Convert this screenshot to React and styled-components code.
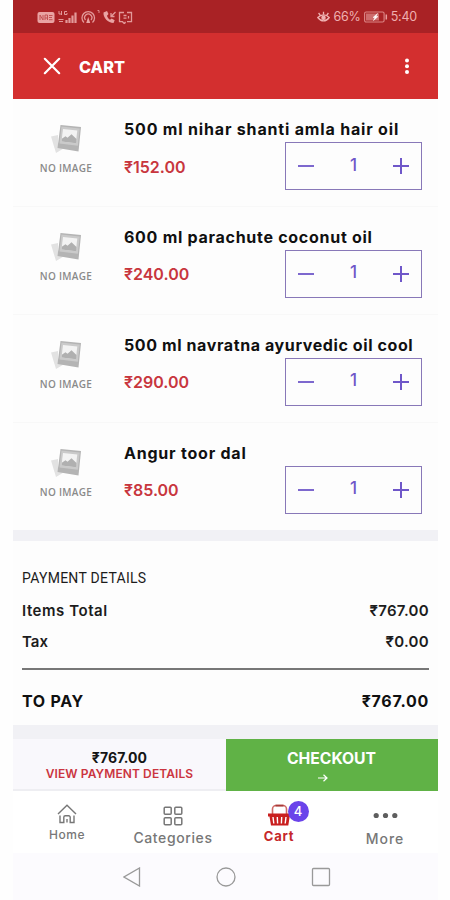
import React from 'react';
import styled, { createGlobalStyle } from 'styled-components';

const RED = '#d32f2f';
const PURPLE = '#6f57c9';

const items = [
    { id: 1, name: '500 ml nihar shanti amla hair oil', price: 152, qty: 1, tracking: 0.82 },
    { id: 2, name: '600 ml parachute coconut oil', price: 240, qty: 1, tracking: 0.72 },
    { id: 3, name: '500 ml navratna ayurvedic oil cool', price: 290, qty: 1, tracking: 0.6 },
    { id: 4, name: 'Angur toor dal', price: 85, qty: 1, tracking: 0.78 },
];

const total = items.reduce((sum, item) => sum + item.price * item.qty, 0);
const rupees = (value) => '₹' + value.toFixed(2);

// icons
const StatusIcons = () => (
    <svg width="98" height="16" viewBox="0 0 98 16" fill="none" stroke="#e39a9a" strokeWidth="1.3">
        <rect x="0.5" y="3" width="17" height="11" rx="2" fill="#e9a3a3" stroke="none" />
        <path d="M3 11V6l3 5V6M8 11V6h2.500v5M8 9h2.500M12 6.500h3.500M12 8.500h3M12 10.700h3.500" stroke="#c25052" strokeWidth="1" />
        <path d="M22 2v3h3M24.500 2v4M30 2.500h-2.500v3H30V4M21.500 10.500h5M22 12.500h4" strokeWidth="1" />
        <path d="M29.500 14v-3M32.500 14V9M35.500 14V6.500M38.500 14V3.500" strokeWidth="2.200" />
        <path d="M47 13.500a6.300 6.300 0 1 1 8.500 0M48.500 11a3.600 3.600 0 1 1 5.500 0" />
        <path d="M51.200 8l2 6h-4z" fill="#e9a3a3" stroke="none" />
        <path d="M60.500 1.500H62V4" strokeWidth="0.900" />
        <path d="M66.500 3.500c-.5 5 4.500 10.500 10 10.500l1.200-2.800-3-1.700-1.700 1.200c-1.600-1-2.500-2.400-3-4l1.500-1.600-1.500-3z" fill="#e9a3a3" stroke="none" />
        <path d="M78.500 3l-4.500 4.500M74 4v3.500h3.500" />
        <path d="M87 3.500h-4.500v9.200h3l2 2M88.500 12.700l-1 2M90 3.500h4.500v9.200H90M86.500 6.500h3M86.500 9.200h3M91.500 7v2.500" />
    </svg>
);

const EyeIcon = () => (
    <svg width="13" height="12" viewBox="0 0 13 12" fill="none" stroke="#f0b4b4" strokeWidth="1.300">
        <path d="M.8 6.500c3.500-3.600 8-3.600 11.400 0-3.400 4.600-7.900 4.600-11.400 0z" />
        <circle cx="6.500" cy="6.800" r="1.600" fill="#f0b4b4" />
        <path d="M6.500 3.500V.8M3.300 4.300L1.600 2M9.700 4.300L11.400 2" />
    </svg>
);

const BatteryIcon = () => (
    <svg width="24" height="12" viewBox="0 0 24 12" fill="none">
        <rect x="0.600" y="1" width="19.500" height="10" rx="1.500" stroke="#dc8686" strokeWidth="1.100" />
        <rect x="2" y="2.500" width="13" height="7" fill="#cd6c6d" />
        <path d="M13.500 2.500l-4.500 4h2L9.500 9.500l4.500-4h-2z" fill="#fff" stroke="#fff" strokeWidth="0.500" />
        <path d="M22.300 3.500v5" stroke="#e79c9c" strokeWidth="1.500" />
    </svg>
);

const CloseIcon = () => (
    <svg width="18" height="18" viewBox="0 0 18 18" stroke="#fff" strokeWidth="2.200" strokeLinecap="round">
        <path d="M1.800 1.800l14.400 14.400M16.200 1.800L1.800 16.200" />
    </svg>
);

const DotsIcon = () => (
    <svg width="6" height="18" viewBox="0 0 6 18" fill="#fff">
        <circle cx="3" cy="3.500" r="2" />
        <circle cx="3" cy="9.200" r="2" />
        <circle cx="3" cy="15" r="2" />
    </svg>
);

const PhotoIcon = () => (
    <svg width="32" height="31" viewBox="0 0 32 31">
        <path d="M1 12.500l7-1.500v11l5.500 2.500-7.500 4.500z" fill="#e2e2e2" />
        <path d="M10.500 1L31 3l-2.500 24.500L7.500 24z" fill="#b4b4b4" />
        <path d="M11.500 2.500l18.300 2-2 17.300L9.500 19.500z" fill="#cacaca" />
        <path d="M13 5l14.300 1.600-1.500 12.600-14.300-1.700z" fill="#f3f3f3" />
        <path d="M11.800 14.800l3.700-2.500 2 1.400 4-3.500 5 4.700-.5 4.400-14.500-1.700z" fill="#b0b0b0" />
    </svg>
);

const MinusIcon = () => (
    <svg width="18" height="18" viewBox="0 0 18 18" stroke={PURPLE} strokeWidth="1.800">
        <path d="M1 9h16" />
    </svg>
);

const PlusIcon = () => (
    <svg width="18" height="18" viewBox="0 0 18 18" stroke={PURPLE} strokeWidth="2">
        <path d="M1 9h16M9 1v16" />
    </svg>
);

const ArrowIcon = () => (
    <svg width="10" height="8" viewBox="0 0 10 8" fill="none" stroke="#fff" strokeWidth="1.200">
        <path d="M0 4h9M5.500.8L9 4 5.500 7.200" />
    </svg>
);

const HomeIcon = () => (
    <svg width="20" height="20" viewBox="0 0 20 20" fill="none" stroke="#777" strokeWidth="1.400">
        <path d="M1 10L10 1.200 19 10" />
        <path d="M3 11.500v7h3.800v-5.300a1.500 1.500 0 0 1 1.500-1.500h3.400a1.500 1.500 0 0 1 1.500 1.500v5.300H17v-7M10 18.500v-3.500" />
    </svg>
);

const GridIcon = () => (
    <svg width="20" height="20" viewBox="0 0 20 20" fill="none" stroke="#777" strokeWidth="1.500">
        <rect x="1.200" y="1.200" width="7" height="7" rx="1" />
        <rect x="11.800" y="1.200" width="7" height="7" rx="1" />
        <rect x="1.200" y="11.800" width="7" height="7" rx="1" />
        <rect x="11.800" y="11.800" width="7" height="7" rx="1" />
    </svg>
);

const BasketIcon = () => (
    <svg width="23" height="22" viewBox="0 0 23 22" fill="none">
        <path d="M4.500 10V5a3.500 3.500 0 0 1 3.500-3.500h7A3.500 3.500 0 0 1 18.500 5v5" stroke="#cf6a66" strokeWidth="1.600" />
        <path d="M7.500 1.600h8" stroke="#a83a38" strokeWidth="1.800" />
        <path d="M0 9.500h23v3h-1.300L20.300 21.500H3L1.500 12.500H0z" fill="#c91f1f" />
        <path d="M5 13l.8 6.500M9.300 13l.3 6.500M13.700 13l-.3 6.500M18 13l-.8 6.500" stroke="#fff" strokeWidth="1.400" />
    </svg>
);

const MoreIcon = () => (
    <svg width="25" height="7" viewBox="0 0 25 7" fill="#5e5e5e">
        <circle cx="3.200" cy="3.500" r="2.600" />
        <circle cx="12.500" cy="3.500" r="2.600" />
        <circle cx="21.800" cy="3.500" r="2.600" />
    </svg>
);

const BackIcon = () => (
    <svg width="18" height="20" viewBox="0 0 18 20" fill="none" stroke="#999" strokeWidth="1.300">
        <path d="M16.500 1v18L1 10z" />
    </svg>
);

const CircleIcon = () => (
    <svg width="20" height="20" viewBox="0 0 20 20" fill="none" stroke="#999" strokeWidth="1.300">
        <circle cx="10" cy="10" r="9" />
    </svg>
);

const SquareIcon = () => (
    <svg width="20" height="20" viewBox="0 0 20 20" fill="none" stroke="#999" strokeWidth="1.300">
        <rect x="1.500" y="1.500" width="17" height="17" rx="1" />
    </svg>
);

const App = () => {
    return (
        <Page>
            <GlobalStyle />
            <Phone>
                <StatusBar>
                    <StatusIcons />
                    <StatusRight>
                        <EyeIcon />
                        <span>66%</span>
                        <BatteryIcon />
                        <span>5:40</span>
                    </StatusRight>
                </StatusBar>

                <AppBar>
                    <CloseIcon />
                    <AppTitle>CART</AppTitle>
                    <DotsIcon />
                </AppBar>

                <ItemList>
                    {items.map((item) => (
                        <Item key={item.id}>
                            <Thumb>
                                <PhotoIcon />
                                <span>NO IMAGE</span>
                            </Thumb>
                            <ItemInfo>
                                <ItemName $tracking={item.tracking}>{item.name}</ItemName>
                                <ItemControls>
                                    <Price>{rupees(item.price)}</Price>
                                    <Stepper>
                                        <MinusIcon />
                                        <Quantity>{item.qty}</Quantity>
                                        <PlusIcon />
                                    </Stepper>
                                </ItemControls>
                            </ItemInfo>
                        </Item>
                    ))}
                </ItemList>

                <Band $height={11} />

                <Payment>
                    <PaymentTitle>PAYMENT DETAILS</PaymentTitle>
                    <PaymentRow>
                        <Label $tracking={0.55}>Items Total</Label>
                        <Label $tracking={0.3}>{rupees(total)}</Label>
                    </PaymentRow>
                    <PaymentRow>
                        <Label>Tax</Label>
                        <Label $tracking={0.3}>{rupees(0)}</Label>
                    </PaymentRow>
                    <ToPay>
                        <Label $tracking={0.7}>TO PAY</Label>
                        <Label $tracking={0.7}>{rupees(total)}</Label>
                    </ToPay>
                </Payment>

                <Band $height={14} />

                <CheckoutBar>
                    <Summary>
                        <SummaryTotal>{rupees(total)}</SummaryTotal>
                        <SummaryLink>VIEW PAYMENT DETAILS</SummaryLink>
                    </Summary>
                    <Checkout>
                        <span>CHECKOUT</span>
                        <ArrowIcon />
                    </Checkout>
                </CheckoutBar>

                <Tabs>
                    <Tab $size={12} $gap={2} $top={13} $tracking={0.5}>
                        <HomeIcon />
                        <TabLabel>Home</TabLabel>
                    </Tab>
                    <Tab $size={14} $gap={3} $top={15} $tracking={0.6}>
                        <GridIcon />
                        <TabLabel>Categories</TabLabel>
                    </Tab>
                    <Tab $size={13} $gap={1} $top={13} $tracking={0.7} $active>
                        <BasketWrap>
                            <BasketIcon />
                            <Badge>{items.length}</Badge>
                        </BasketWrap>
                        <TabLabel>Cart</TabLabel>
                    </Tab>
                    <Tab $size={14} $gap={11} $top={21} $tracking={1}>
                        <MoreIcon />
                        <TabLabel>More</TabLabel>
                    </Tab>
                </Tabs>

                <SystemNav>
                    <BackIcon />
                    <CircleIcon />
                    <SquareIcon />
                </SystemNav>
            </Phone>
        </Page>
    );
};

export default App;

// Page components
const GlobalStyle = createGlobalStyle`
    * {
        box-sizing: border-box;
    }
    body {
        margin: 0;
        background: #fff;
        font-family: Inter, 'Open Sans', sans-serif;
    }
    svg {
        display: block;
        flex: none;
    }
`

const Page = styled.div`
    height: 900px;
    padding: 0 12px 0 13px;
    background: #fefefe;
    overflow: hidden;
`

const Phone = styled.div`
    display: flex;
    flex-direction: column;
    height: 900px;
    background: #fdfdfd;
`

const StatusBar = styled.div`
    display: flex;
    align-items: center;
    justify-content: space-between;
    height: 33px;
    padding: 0 21px 0 24px;
    background: #a92225;
`

const StatusRight = styled.div`
    display: flex;
    align-items: center;
    gap: 3px;
    color: #efb0b0;
    font-size: 12.5px;
    letter-spacing: -0.2px;
`

const AppBar = styled.div`
    display: flex;
    align-items: center;
    height: 66px;
    padding: 0 28px 0 30px;
    background: ${RED};
`

const AppTitle = styled.h1`
    flex: 1;
    margin: 2px 0 0 18px;
    color: #fff;
    font-size: 16.3px;
    font-weight: 800;
`

// Cart items
const ItemList = styled.div`
    height: 431px;
`

const Item = styled.div`
    display: flex;
    height: 107.85px;
    border-bottom: 1px solid #f8f8f8;

    &:last-child {
        border-bottom: none;
    }
`

const Thumb = styled.div`
    display: flex;
    flex-direction: column;
    align-items: center;
    gap: 7px;
    width: 106px;
    padding-top: 25px;
    color: #8a8a8a;
    font: 600 10px/12px 'Open Sans', sans-serif;
    letter-spacing: 0.3px;
`

const ItemInfo = styled.div`
    flex: 1;
    padding: 18px 16px 0 5px;
`

const ItemName = styled.div`
    height: 25px;
    color: #101010;
    font-size: 16px;
    font-weight: 700;
    line-height: 25px;
    letter-spacing: ${(props) => props.$tracking}px;
    white-space: nowrap;
`

const ItemControls = styled.div`
    display: flex;
    align-items: center;
    justify-content: space-between;
`

const Price = styled.span`
    padding-top: 1px;
    color: #c8363e;
    font-size: 16px;
    font-weight: 600;
`

const Stepper = styled.div`
    display: flex;
    align-items: center;
    justify-content: space-between;
    width: 137px;
    height: 48px;
    padding: 0 11px;
    border: 1.500px solid #8878b8;
`

const Quantity = styled.span`
    padding-bottom: 3px;
    color: ${PURPLE};
    font-size: 17px;
    font-weight: 500;
`

const Band = styled.div`
    height: ${(props) => props.$height}px;
    background: #f1f1f5;
`

// Payment details
const Payment = styled.div`
    height: 184px;
    padding: 27px 9px 0;
    color: #1c1c1c;
`

const PaymentTitle = styled.div`
    margin-bottom: 7px;
    font: 400 14px/20px Roboto, sans-serif;
    letter-spacing: 0.28px;
`

const PaymentRow = styled.div`
    display: flex;
    justify-content: space-between;
    font-size: 15px;
    font-weight: 600;
    line-height: 31px;
`

const Label = styled.span`
    letter-spacing: ${(props) => props.$tracking || 0}px;
`

const ToPay = styled(PaymentRow)`
    margin-top: 11px;
    padding-top: 16px;
    border-top: 2px solid #777;
    color: #101010;
    font-size: 16px;
    font-weight: 700;
`

// Bottom bars
const CheckoutBar = styled.div`
    display: grid;
    grid-template-columns: 213px 1fr;
    height: 52px;
`

const Summary = styled.div`
    display: flex;
    flex-direction: column;
    align-items: center;
    padding-top: 11px;
    background: #f9f8fc;
    border-bottom: 2px solid #eeeef2;
`

const SummaryTotal = styled.span`
    color: #151515;
    font-size: 14px;
    font-weight: 700;
    line-height: 16px;
    letter-spacing: 0.1px;
`

const SummaryLink = styled.span`
    color: #cb3540;
    font-size: 12px;
    font-weight: 600;
    line-height: 16px;
    letter-spacing: 0.1px;
`

const Checkout = styled.div`
    display: flex;
    flex-direction: column;
    align-items: center;
    padding-top: 10px;
    gap: 5px;
    padding-right: 1px;
    background: #60b246;
    color: #fff;
    font-size: 15.700px;
    font-weight: 700;
    line-height: 20px;

    svg {
        margin-right: 18px;
    }
`

const Tabs = styled.div`
    display: grid;
    grid-template-columns: repeat(4, 1fr);
    height: 62px;
    padding-left: 1px;
    background: #fff;
`

const TabLabel = styled.span`
    line-height: 18px;
`

const Tab = styled.div`
    display: flex;
    flex-direction: column;
    align-items: center;
    gap: ${(props) => props.$gap}px;
    padding-top: ${(props) => props.$top}px;
    color: ${(props) => (props.$active ? '#c5282a' : '#777')};
    font-size: ${(props) => props.$size}px;
    font-weight: ${(props) => (props.$active ? 700 : 500)};
    letter-spacing: ${(props) => props.$tracking}px;
`

const BasketWrap = styled.div`
    position: relative;
`

const Badge = styled.span`
    position: absolute;
    top: -3px;
    left: 20px;
    width: 21px;
    height: 21px;
    border-radius: 50%;
    background: #6a43ea;
    color: #fff;
    font-size: 13px;
    font-weight: 500;
    line-height: 21px;
    letter-spacing: 0;
    text-align: center;
`

const SystemNav = styled.div`
    display: flex;
    justify-content: center;
    gap: 75px;
    height: 47px;
    padding: 14px 0 0 2px;
    background: #fcfbfe;
`
